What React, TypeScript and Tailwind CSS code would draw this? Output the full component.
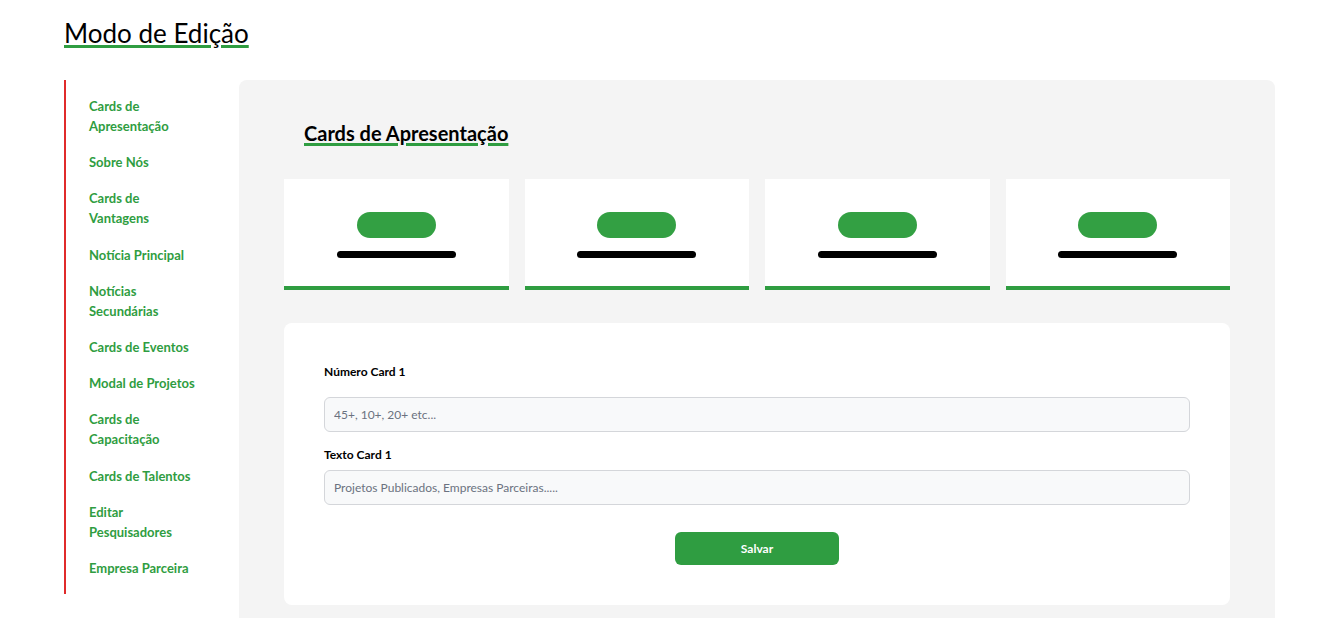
import React from "react";

const menu = [
  "Cards de Apresentação",
  "Sobre Nós",
  "Cards de Vantagens",
  "Notícia Principal",
  "Notícias Secundárias",
  "Cards de Eventos",
  "Modal de Projetos",
  "Cards de Capacitação",
  "Cards de Talentos",
  "Editar Pesquisadores",
  "Empresa Parceira",
];

function PreviewCard() {
  return (
    <div className="flex h-[111px] flex-col items-center border-b-4 border-[#2f9d41] bg-white pt-[33px]">
      <div className="h-[26px] w-[79px] rounded-full bg-[#33a043]" />
      <div className="mt-[13px] h-[7px] w-[119px] rounded-full bg-black" />
    </div>
  );
}

export default function App() {
  return (
    <div
      className="min-h-screen bg-white pl-[64px] pr-[68px]"
      style={{ fontFamily: 'Lato, "Open Sans", sans-serif' }}
    >
      <h1 className="pt-[16px] text-[26px] leading-[34px] text-black underline decoration-[#2f9d41] decoration-[3px] underline-offset-[2px]">
        Modo de Edição
      </h1>

      <div className="mt-[30px] flex">
        <nav className="w-[175px] shrink-0 self-start border-l-2 border-[#e02b2b] py-4 pl-[23px] pr-[42px]">
          <ul className="flex flex-col gap-[16.2px]">
            {menu.map((item) => (
              <li
                key={item}
                className="text-[13px] font-bold leading-[20px] text-[#2f9d41]"
              >
                {item}
              </li>
            ))}
          </ul>
        </nav>

        <main className="flex-1 rounded-t-lg bg-[#f4f4f4] px-[45px] pt-[39px] pb-[13px]">
          <h2 className="pl-[20px] text-[20px] font-bold leading-[28px] text-black underline decoration-[#2f9d41] decoration-[3px] underline-offset-[2px]">
            Cards de Apresentação
          </h2>

          <div className="mt-[32px] grid grid-cols-4 gap-4">
            <PreviewCard />
            <PreviewCard />
            <PreviewCard />
            <PreviewCard />
          </div>

          <form className="mt-[33px] rounded-lg bg-white px-[40px] pt-[41px] pb-[40px]">
            <label className="block text-[12px] font-bold leading-[16px] text-black">
              Número Card 1
            </label>
            <input
              placeholder="45+, 10+, 20+ etc..."
              className="mt-[17px] h-[35px] w-full rounded-md border border-[#d4d6da] bg-[#f8f9fa] px-[9px] text-[12px] text-gray-700 placeholder:text-[#6b7280] outline-none"
            />
            <label className="mt-[15px] block text-[12px] font-bold leading-[16px] text-black">
              Texto Card 1
            </label>
            <input
              placeholder="Projetos Publicados, Empresas Parceiras....."
              className="mt-[7px] h-[35px] w-full rounded-md border border-[#d4d6da] bg-[#f8f9fa] px-[9px] text-[12px] text-gray-700 placeholder:text-[#6b7280] outline-none"
            />
            <div className="mt-[27px] flex justify-center">
              <button
                type="button"
                className="h-[33px] w-[164px] rounded-md bg-[#2f9d41] text-[12px] font-bold text-white"
              >
                Salvar
              </button>
            </div>
          </form>
        </main>
      </div>
    </div>
  );
}
